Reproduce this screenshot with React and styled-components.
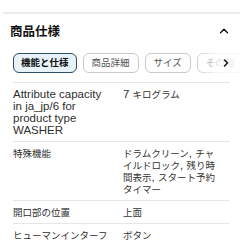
import React from 'react'
import styled, { createGlobalStyle } from 'styled-components'
import { ChevronUp, ChevronRight } from 'lucide-react'

const GlobalStyle = createGlobalStyle`
  body {
    margin: 0;
    background: #fff;
    font-family: "Liberation Sans", "Noto Sans CJK JP", sans-serif;
    color: #333;
  }
`

const Section = styled.section`
  padding-top: 12px;
  width: 240px;
`

const TopRule = styled.div`
  height: 2px;
  margin-left: 3px;
  background: #ebebeb;
`

const Header = styled.div`
  display: flex;
  align-items: center;
  justify-content: space-between;
  height: 33px;
  padding: 0 9px 0 10px;
`

const Title = styled.h2`
  margin: 0;
  font-family: "Noto Sans CJK JP", sans-serif;
  font-size: 12.5px;
  font-weight: 700;
  color: #111;
`

const ChipStrip = styled.div`
  position: relative;
  margin-top: 6px;
  overflow: hidden;
`

const ChipRow = styled.div`
  display: flex;
  gap: 6px;
  padding-left: 13px;
  white-space: nowrap;
`

const Chip = styled.button`
  flex: none;
  height: 20px;
  padding: 0 ${p => (p.$active ? '7px' : '8px')};
  border: ${p => (p.$active ? '1.5px solid #2f4f63' : '1px solid #c9c9c9')};
  border-radius: 6px;
  background: ${p => (p.$active ? '#e7f3f8' : '#fff')};
  font-family: "Noto Sans CJK JP", sans-serif;
  font-size: 9.5px;
  font-weight: ${p => (p.$active ? 700 : 400)};
  color: ${p => (p.$active ? '#0f1111' : '#555')};
  line-height: 1;
`

const Fade = styled.div`
  position: absolute;
  top: 0;
  right: 0;
  bottom: 0;
  width: 40px;
  display: flex;
  align-items: center;
  justify-content: flex-end;
  padding-right: 8px;
  background: linear-gradient(to right, rgba(255, 255, 255, 0) 0%, rgba(255, 255, 255, 0.85) 55%);
  color: #111;
`

const Table = styled.div`
  margin: 9px 10px 0 13px;
`

const Row = styled.div`
  display: grid;
  grid-template-columns: 99px 1fr;
  column-gap: 11px;
  padding: 5px 0;
  border-top: 1px solid #e6e6e6;
  font-size: 11.5px;
  line-height: 12px;
`

const Label = styled.div`
  color: #2f2f2f;
`

const Value = styled.div`
  color: #333;
  padding-right: 11px;
`

const Ja = styled.span`
  font-family: "Noto Sans CJK JP", sans-serif;
  font-size: 9.5px;
`

const specs = [
  { label: 'Attribute capacity in ja_jp/6 for product type WASHER', value: <>7 <Ja>キログラム</Ja></> },
  {
    label: <Ja>特殊機能</Ja>,
    value: (
      <>
        <Ja>ドラムクリーン</Ja>, <Ja>チャイルドロック</Ja>, <Ja>残り時間表示</Ja>, <Ja>スタート予約タイマー</Ja>
      </>
    ),
  },
  { label: <Ja>開口部の位置</Ja>, value: <Ja>上面</Ja> },
  { label: <Ja>ヒューマンインターフェース</Ja>, value: <Ja>ボタン</Ja> },
]

const App = () => (
  <>
    <GlobalStyle />
    <Section>
      <TopRule />
      <Header>
        <Title>商品仕様</Title>
        <ChevronUp size={14} strokeWidth={2.4} color="#111" />
      </Header>
      <ChipStrip>
        <ChipRow>
          <Chip $active>機能と仕様</Chip>
          <Chip>商品詳細</Chip>
          <Chip>サイズ</Chip>
          <Chip>その他</Chip>
        </ChipRow>
        <Fade>
          <ChevronRight size={12} strokeWidth={3} />
        </Fade>
      </ChipStrip>
      <Table>
        {specs.map((s, i) => (
          <Row key={i}>
            <Label>{s.label}</Label>
            <Value>{s.value}</Value>
          </Row>
        ))}
      </Table>
    </Section>
  </>
)

export default App
